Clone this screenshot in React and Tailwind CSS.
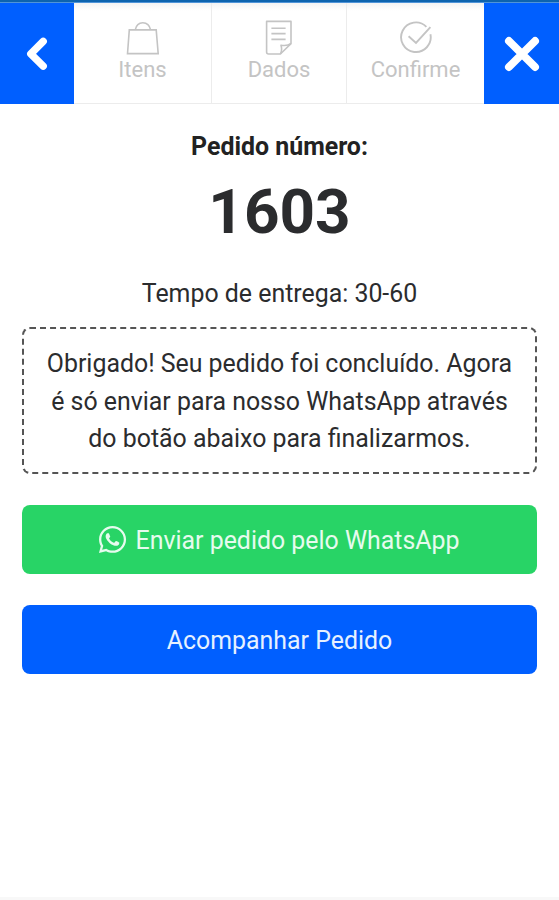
import React from 'react';
import { FaWhatsapp } from 'react-icons/fa';

const BagIcon = () => (
  <svg width="34" height="36" viewBox="0 0 34 36" fill="none" stroke="currentColor" strokeWidth="1.6">
    <path d="M3.3 9.9H30.2L32.2 33.6H1.5Z" />
    <path d="M9.2 9.9C10.2 5 13.2 2.7 16.8 2.7S23.6 5 24.6 9.9" />
  </svg>
);

const NoteIcon = () => (
  <svg width="34" height="36" viewBox="0 0 34 36" fill="none" stroke="currentColor" strokeWidth="1.6" strokeLinejoin="round">
    <path d="M4.6 1.4H29V23.6L18.4 34H6.6Q4.6 34 4.6 32Z" />
    <path d="M18.4 33.8C20 31 19.8 28 19 25.2C22.6 25.8 26.4 25.6 29 23.4" />
    <path d="M9.4 8.2H23.6M9.4 13.6H23.6M9.4 19.4H23.6" />
  </svg>
);

const CheckIcon = () => (
  <svg width="34" height="36" viewBox="0 0 34 36" fill="none" stroke="currentColor" strokeWidth="1.9">
    <path d="M27.4 6.8A14.8 14.8 0 1 0 31.4 14.2" />
    <path d="M9.6 16.2L17 23L31.4 7.2" />
  </svg>
);

const steps = [
  { label: 'Itens', icon: BagIcon, width: 'w-[138px]' },
  { label: 'Dados', icon: NoteIcon, width: 'w-[135px]' },
  { label: 'Confirme', icon: CheckIcon, width: 'w-[137px]' },
];

const Header = () => (
  <header>
    <div className="h-[3px] bg-[#0d63ae] border-b border-[#4f94d8]"></div>
    <div className="flex h-[101px]">
      <button className="w-[74px] bg-[#005fff] text-white flex items-center justify-center" aria-label="Voltar">
        <svg width="24" height="36" viewBox="0 0 24 36" fill="none" stroke="currentColor" strokeWidth="7.4" strokeLinecap="round" strokeLinejoin="round">
          <path d="M18.2 5.4L5.8 17.8L18.2 30.2" />
        </svg>
      </button>
      {steps.map(({ label, icon: Icon, width }) => (
        <div
          key={label}
          className={`${width} flex flex-col items-center pt-[17px] text-[#c4c4c4] bg-linear-to-b from-[#f3f3f3] to-white to-[8px] border-b border-r border-[#ececec] last-of-type:border-r-0`}
        >
          <Icon />
          <span className="text-[22px] leading-7">{label}</span>
        </div>
      ))}
      <button className="w-[75px] bg-[#005fff] text-white flex items-center justify-center" aria-label="Fechar">
        <svg width="36" height="36" viewBox="0 0 36 36" fill="none" stroke="currentColor" strokeWidth="7.8" strokeLinecap="round">
          <path d="M4.9 4.9L31.1 31.1M31.1 4.9L4.9 31.1" />
        </svg>
      </button>
    </div>
  </header>
);

const App = () => {
  return (
    <div className="h-screen flex flex-col bg-white font-[Roboto,sans-serif] text-[#2b2c2e]">
      <Header />

      <main className="flex-1 px-[22px] pt-6 text-center text-[24.9px] leading-[37.5px]">
        <h2 className="font-bold text-[#222]">Pedido número:</h2>
        <h1 className="mt-[9px] font-bold text-[62px] leading-[74px]">1603</h1>
        <p className="mt-[26px]">Tempo de entrega: 30-60</p>

        <div className="mt-[15px] h-[147px] flex items-center justify-center rounded-lg border-2 border-dashed border-[#555]">
          <p className="pt-[2px]">
            Obrigado! Seu pedido foi concluído. Agora
            <br />
            é só enviar para nosso WhatsApp através
            <br />
            do botão abaixo para finalizarmos.
          </p>
        </div>

        <button className="mt-[31px] w-full h-[69px] pt-0.5 pr-[3px] flex items-center justify-center gap-2 rounded-lg bg-[#28d466] text-[#e6fbee]">
          <FaWhatsapp className="size-[31px] -mt-0.5" />
          Enviar pedido pelo WhatsApp
        </button>
        <button className="mt-[31px] w-full h-[69px] pt-0.5 flex items-center justify-center rounded-lg bg-[#005fff] text-[#e6f1ff]">
          Acompanhar Pedido
        </button>
      </main>

      <div className="h-[3px] bg-[#f8f8f8]"></div>
    </div>
  );
};

export default App;
